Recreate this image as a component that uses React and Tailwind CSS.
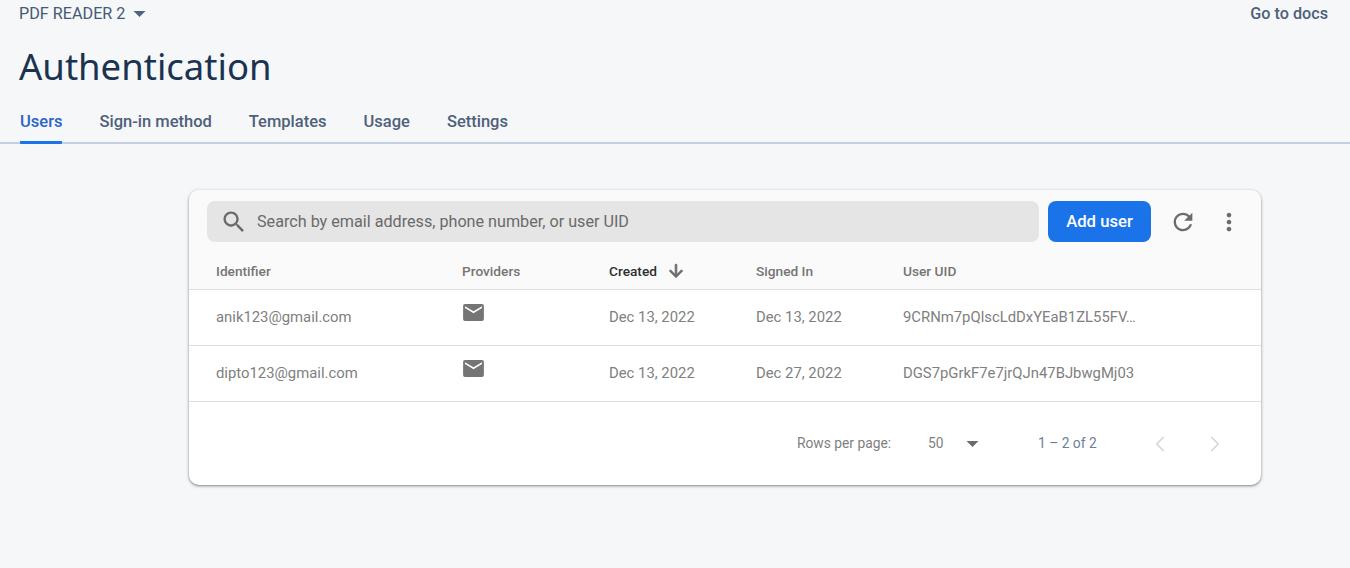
import { ChevronLeft, ChevronRight } from 'lucide-react';

const users = [
  { email: 'anik123@gmail.com', created: 'Dec 13, 2022', signedIn: 'Dec 13, 2022', uid: '9CRNm7pQlscLdDxYEaB1ZL55FV…' },
  { email: 'dipto123@gmail.com', created: 'Dec 13, 2022', signedIn: 'Dec 27, 2022', uid: 'DGS7pGrkF7e7jrQJn47BJbwgMj03' },
];

const tabs = ['Users', 'Sign-in method', 'Templates', 'Usage', 'Settings'];

// material icon paths
const searchPath = 'M15.5 14h-.79l-.28-.27C15.41 12.59 16 11.11 16 9.5 16 5.91 13.09 3 9.5 3S3 5.91 3 9.5 5.91 16 9.5 16c1.61 0 3.09-.59 4.23-1.57l.27.28v.79l5 4.99L20.49 19l-4.99-5zm-6 0C7.01 14 5 11.99 5 9.5S7.01 5 9.5 5 14 7.01 14 9.5 11.99 14 9.5 14z';
const refreshPath = 'M17.65 6.35C16.2 4.9 14.21 4 12 4c-4.42 0-7.99 3.58-7.99 8s3.57 8 7.99 8c3.73 0 6.84-2.55 7.73-6h-2.08c-.82 2.33-3.04 4-5.65 4-3.31 0-6-2.69-6-6s2.69-6 6-6c1.66 0 3.14.69 4.22 1.78L13 11h7V4l-2.35 2.35z';
const morePath = 'M12 8c1.1 0 2-.9 2-2s-.9-2-2-2-2 .9-2 2 .9 2 2 2zm0 2c-1.1 0-2 .9-2 2s.9 2 2 2 2-.9 2-2-.9-2-2-2zm0 6c-1.1 0-2 .9-2 2s.9 2 2 2 2-.9 2-2-.9-2-2-2z';
const arrowPath = 'M20 12l-1.41-1.41L13 16.17V4h-2v12.17l-5.58-5.59L4 12l8 8 8-8z';

function MatIcon({ d, size = 24, className, heavy }) {
  return (
    <svg width={size} height={size} viewBox="0 0 24 24" className={className}>
      <path d={d} fill="currentColor" stroke={heavy ? 'currentColor' : 'none'} strokeWidth={heavy ? 1 : 0} />
    </svg>
  );
}

function MailIcon() {
  return (
    <svg width="21" height="17" viewBox="0 0 22 18" className="block">
      <path
        fill="#757575"
        d="M2 0h18a2 2 0 0 1 2 2v14a2 2 0 0 1-2 2H2a2 2 0 0 1-2-2V2a2 2 0 0 1 2-2zm0 4.2 9 5.6 9-5.6V2.4l-9 5.4-9-5.4z"
      />
    </svg>
  );
}

function Caret({ className }) {
  return (
    <svg width="13" height="6" viewBox="0 0 12 6" className={className}>
      <path d="M0 0h12L6 6z" fill="currentColor" />
    </svg>
  );
}

export default function App() {
  return (
    <div className="h-[568px] overflow-hidden bg-[#f5f7f9] font-['Roboto',sans-serif]">
      <div className="flex items-center justify-between pl-[19px] pr-[22px] h-[28px]">
        <div className="flex items-center gap-[8px] text-[16.2px] text-[#455a75]">
          PDF READER 2
          <Caret className="text-[#4f6480]" />
        </div>
        <div className="text-[16.2px] font-medium text-[#4f6079]">Go to docs</div>
      </div>

      <h1 className="pl-[19px] mt-[11px] h-[54px] text-[36.5px] leading-[54px] text-[#1a3350] font-['Noto_Sans',sans-serif]">
        Authentication
      </h1>

      <div className="mt-[11px] h-[40px] flex gap-[37px] pl-[20px] border-b-2 border-[#c3cfe0]">
        {tabs.map((tab, i) => (
          <div
            key={tab}
            className={
              i === 0
                ? 'h-[40px] pt-[6px] text-[16.5px] font-medium leading-6 text-[#2b63c8] border-b-[3px] border-[#1a73e8] rounded-b-[1px]'
                : 'h-[40px] pt-[6px] text-[16.5px] font-medium leading-6 text-[#4f6079]'
            }
          >
            {tab}
          </div>
        ))}
      </div>

      <div className="ml-[189px] mt-[46px] w-[1072px] h-[295px] rounded-[10px] bg-white shadow-[0_1px_2px_rgba(0,0,0,0.3),0_1px_3px_1px_rgba(0,0,0,0.15)] overflow-hidden">
        <div className="bg-[#fafafa] h-[100px] border-b border-[#dedede]">
          <div className="flex items-center pt-[11px] pl-[18px]">
            <div className="flex items-center w-[832px] h-[41px] rounded-lg bg-[#e5e5e5] pl-[13px] text-[16.17px] text-[#6a6a6a]">
              <MatIcon d={searchPath} size={28} className="text-[#6a6a6a] mr-[9px]" />
              <span className="pt-[2px]">Search by email address, phone number, or user UID</span>
            </div>
            <button className="ml-[9px] w-[103px] h-[41px] rounded-lg bg-[#1a73e8] text-white text-[16.7px] font-medium">
              Add user
            </button>
            <MatIcon d={refreshPath} size={28} className="ml-[18px] text-[#6b6b6b]" />
            <MatIcon d={morePath} size={28} className="ml-[18px] text-[#6b6b6b]" />
          </div>
          <div className="grid grid-cols-[246px_147px_147px_147px_1fr] pl-[27px] mt-[19px] text-[13.7px] font-medium leading-5 text-[#757575]">
            <div>Identifier</div>
            <div>Providers</div>
            <div className="flex items-center text-[#2e2e2e]">
              Created
              <MatIcon d={arrowPath} size={20} heavy className="ml-[9px] text-[#6b6b6b]" />
            </div>
            <div>Signed In</div>
            <div>User UID</div>
          </div>
        </div>

        {users.map(user => (
          <div
            key={user.email}
            className="grid grid-cols-[246px_147px_147px_147px_1fr] items-center pl-[27px] h-[56px] border-b border-[#dedede] text-[14.85px] text-[#808080]"
          >
            <div>{user.email}</div>
            <div className="mb-[10px] ml-px"><MailIcon /></div>
            <div>{user.created}</div>
            <div>{user.signedIn}</div>
            <div>{user.uid}</div>
          </div>
        ))}

        <div className="flex items-center h-[83px] pl-[608px] text-[#808080]">
          <span className="w-[131px] text-[13.8px]">Rows per page:</span>
          <span className="w-[38px] text-[13.8px]">50</span>
          <Caret className="text-[#6b6b6b]" />
          <span className="ml-[59px] w-[59px] text-[13.8px] text-[#6b7f99]">1 – 2 of 2</span>
          <ChevronLeft size={26} strokeWidth={1.5} className="ml-[50px] text-[#d6d6d6]" />
          <ChevronRight size={26} strokeWidth={1.5} className="ml-[29px] text-[#d6d6d6]" />
        </div>
      </div>
    </div>
  );
}
